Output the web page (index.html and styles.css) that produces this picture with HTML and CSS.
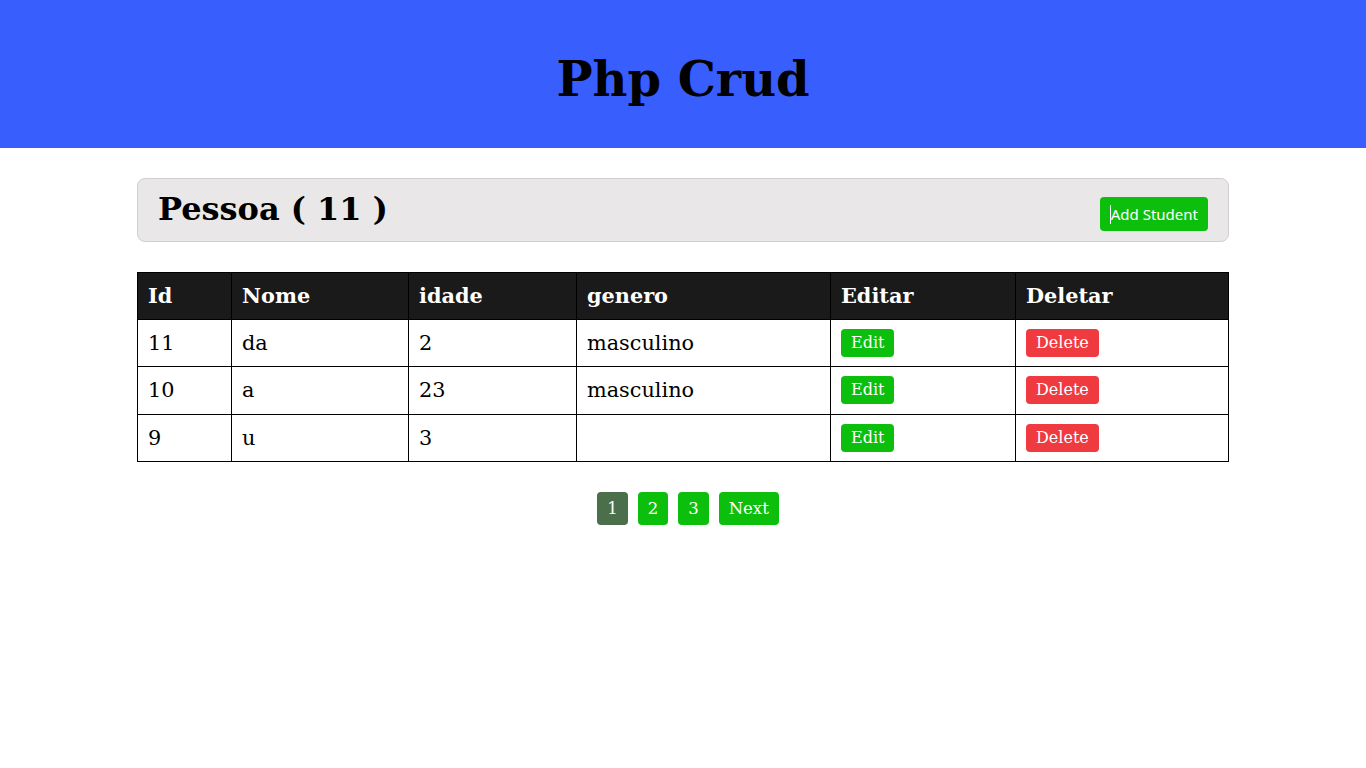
FILE: index.html
```html
<!DOCTYPE html>
<html>
<head>
<meta charset="utf-8">
<link rel="stylesheet" href="styles.css">
</head>
<body>
<header class="topbar">
  <h1 class="title">Php Crud</h1>
</header>
<main class="container">
  <div class="panel">
    <h2 class="panel-title">Pessoa ( 11 )</h2>
    <a class="add-btn"><span class="caret"></span>Add Student</a>
  </div>
  <table class="grid">
    <thead>
      <tr>
        <th class="c1">Id</th>
        <th class="c2">Nome</th>
        <th class="c3">idade</th>
        <th class="c4">genero</th>
        <th class="c5">Editar</th>
        <th class="c6">Deletar</th>
      </tr>
    </thead>
    <tbody>
      <tr>
        <td>11</td><td>da</td><td>2</td><td>masculino</td>
        <td><a class="btn edit">Edit</a></td>
        <td><a class="btn del">Delete</a></td>
      </tr>
      <tr>
        <td>10</td><td>a</td><td>23</td><td>masculino</td>
        <td><a class="btn edit">Edit</a></td>
        <td><a class="btn del">Delete</a></td>
      </tr>
      <tr>
        <td>9</td><td>u</td><td>3</td><td></td>
        <td><a class="btn edit">Edit</a></td>
        <td><a class="btn del">Delete</a></td>
      </tr>
    </tbody>
  </table>
  <nav class="pager">
    <a class="page current">1</a>
    <a class="page">2</a>
    <a class="page">3</a>
    <a class="page">Next</a>
  </nav>
</main>
</body>
</html>
```
FILE: styles.css
```css
* { box-sizing: border-box; }
body {
  margin: 0;
  font-family: "DejaVu Serif", serif;
  color: #000;
  background: #fff;
}
.topbar {
  background: #385ffe;
  height: 148px;
  display: flex;
  align-items: center;
  justify-content: center;
}
.title {
  margin: 0;
  font-size: 48px;
  font-weight: bold;
  padding-top: 10px;
}
.container {
  width: 1092px;
  margin: 30px auto 0;
}
.panel {
  background: #e9e7e8;
  border: 1px solid #cfcfcf;
  border-radius: 8px;
  height: 64px;
  display: flex;
  align-items: center;
  justify-content: space-between;
  padding: 0 20px;
}
.panel-title {
  margin: 0;
  font-size: 32px;
  font-weight: bold;
  position: relative;
  top: -1px;
}
.add-btn {
  background: #0cbf0c;
  color: #fff;
  font-family: "Noto Sans", sans-serif;
  font-size: 15px;
  height: 34px;
  padding: 0 10px;
  border-radius: 4px;
  display: flex;
  align-items: center;
  margin-top: 8px;
}
.caret {
  display: inline-block;
  width: 1px;
  height: 19px;
  background: #fff;
}
.grid {
  width: 100%;
  border-collapse: collapse;
  margin-top: 30px;
  font-size: 20.8px;
}
.grid th, .grid td {
  border: 1px solid #000;
  text-align: left;
  padding: 0 10px;
  height: 47.5px;
}
.grid th {
  background: #1a1a1a;
  color: #fff;
  font-weight: bold;
  height: 46.5px;
}
.c1 { width: 94px; }
.c2 { width: 177px; }
.c3 { width: 168px; }
.c4 { width: 254px; }
.c5 { width: 185px; }
.btn {
  display: inline-block;
  color: #fff;
  font-size: 16px;
  line-height: 28px;
  padding: 0 10px;
  border-radius: 4px;
  vertical-align: middle;
}
.edit { background: #0cbf0c; }
.del { background: #ef3a3f; }
.pager {
  margin-top: 30px;
  display: flex;
  justify-content: center;
  gap: 10px;
  padding-left: 10px;
}
.page {
  display: block;
  background: #0cbf0c;
  color: #fff;
  font-size: 16.5px;
  line-height: 33px;
  padding: 0 10px;
  border-radius: 4px;
}
.page.current { background: #4b6f4b; }
```
